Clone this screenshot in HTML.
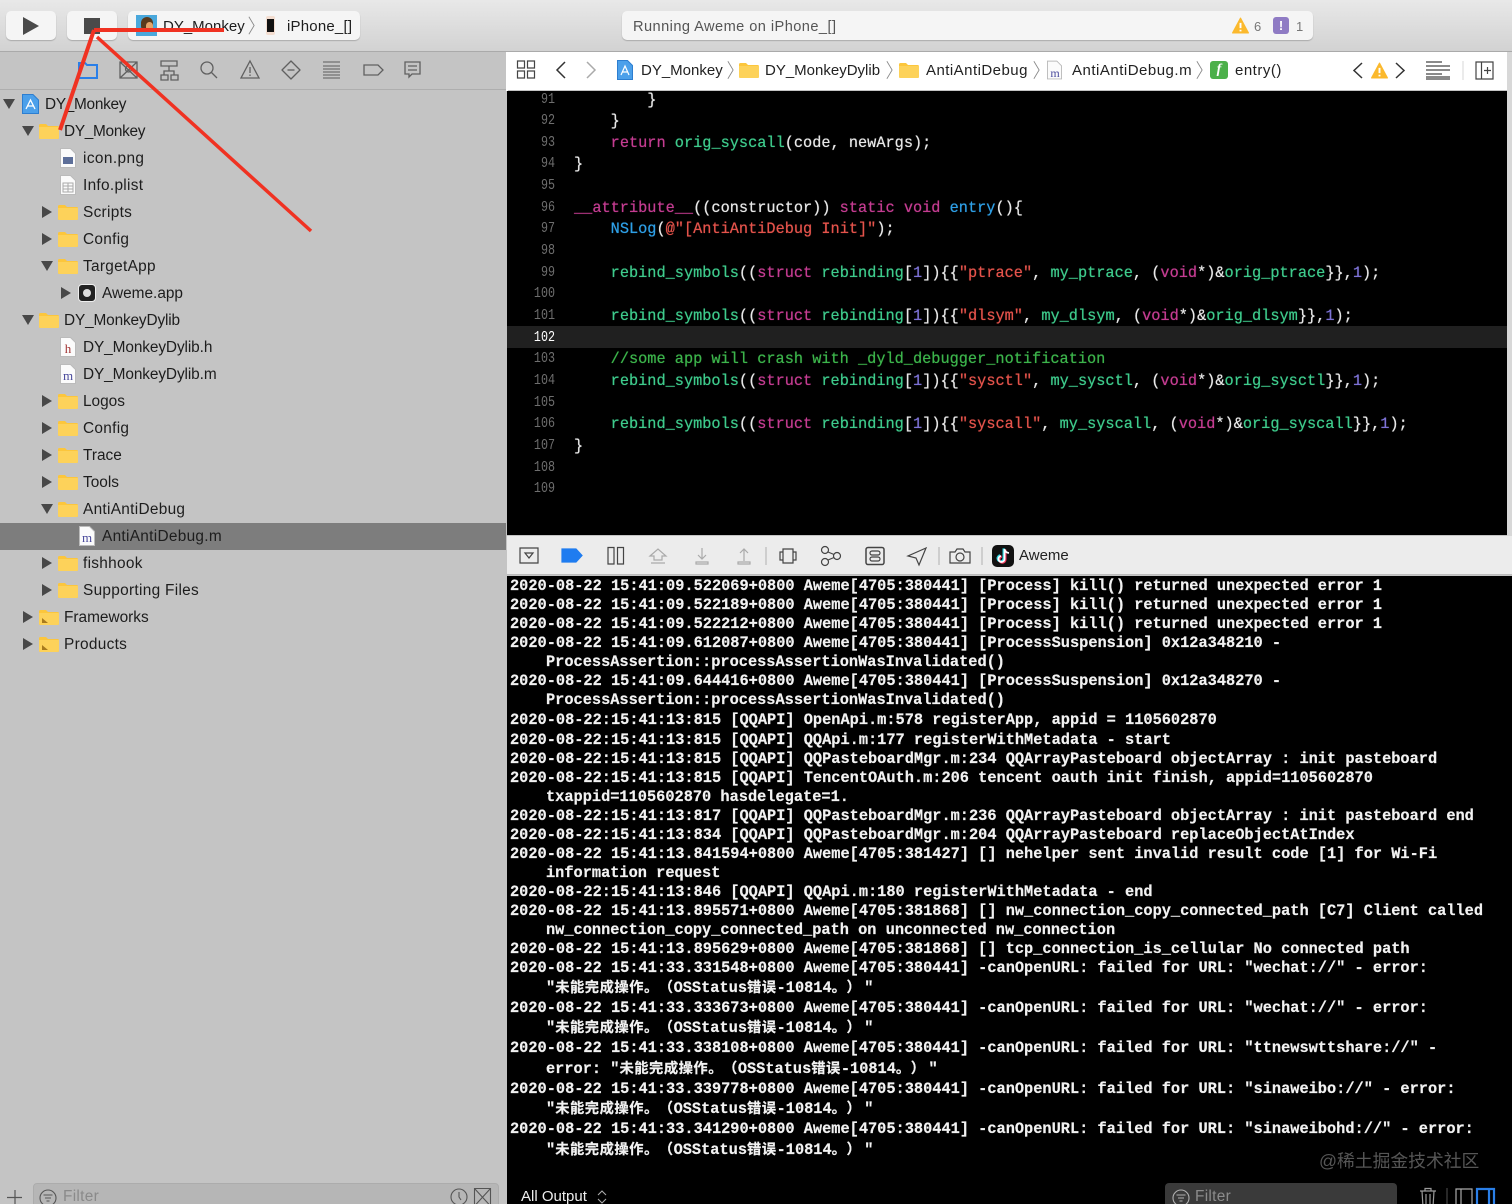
<!DOCTYPE html>
<html><head><meta charset="utf-8"><style>
html,body{margin:0;padding:0;background:#000}
#p{position:relative;width:1512px;height:1204px;overflow:hidden;background:#c4c4c4;font-family:"Liberation Sans","Noto Sans CJK SC",sans-serif;filter:blur(.35px)}
#p>*{position:absolute}
.t{font-size:15.4px;color:#1d1d1d;white-space:pre;line-height:20px;height:20px;margin-top:1px;letter-spacing:.3px}
.j{font-size:15px;color:#222;white-space:pre;line-height:20px;top:61px}
.btn{background:#f5f5f5;border-radius:5px;top:11px;height:29px;box-shadow:0 1px 1px #aaa}
.n{font:15px/20px "Liberation Mono",monospace;color:#6e6e6e;width:48px;text-align:right;left:507px;transform:scaleX(.78);transform-origin:right}
.c{font:15.28px/20px "Liberation Mono",monospace;color:#e8e8e8;white-space:pre;left:574px;margin-top:1px;text-shadow:0 0 .6px currentColor}
.k{color:#c43c91}.g{color:#3ecb8c}.s{color:#e4534b}.u{color:#7d72d6}.b{color:#2e9fe6}.m{color:#3cb44b}
.l{font:bold 15.31px/20px "Liberation Mono","Noto Sans CJK SC",monospace;color:#f2f2f2;white-space:pre;left:510px;margin-top:1px;text-spacing-trim:space-all;-webkit-text-stroke:.2px #f2f2f2}
.z{font-size:14.3px;font-family:"Noto Sans CJK SC",sans-serif;text-spacing-trim:space-all;letter-spacing:.5px;line-height:18px}
.q{margin-left:3px}
.i{left:546px}
svg{overflow:visible}
</style></head><body><div id="p">
<svg width="0" height="0" style="left:0;top:0"><defs>
<symbol id="fo" viewBox="0 0 20 16"><path d="M0 2.500Q0 1 1.500 1H7l2 2h9.500Q20 3 20 4.500V14.500Q20 16 18.500 16H1.500Q0 16 0 14.500Z" fill="#fcc63c"/><path d="M0 4H20V14.500Q20 16 18.500 16H1.500Q0 16 0 14.500Z" fill="#fdd25a"/></symbol>
<symbol id="fp" viewBox="0 0 16 20"><path d="M.5 .5H10.500L15.500 5.500V19.500H.5Z" fill="#fbfbfb" stroke="#bbb"/></symbol>
<symbol id="dn" viewBox="0 0 12 10"><path d="M0 0H12L6 10Z" fill="#484848"/></symbol>
<symbol id="rt" viewBox="0 0 10 12"><path d="M0 0L10 6L0 12Z" fill="#484848"/></symbol>
<symbol id="wn" viewBox="0 0 16 16"><path d="M8 1L15.500 15H.5Z" fill="#fbb92d" stroke="#fbb92d" stroke-linejoin="round"/><path d="M8 5.500V10.500M8 12V13.500" stroke="#fff" stroke-width="1.800"/></symbol>
<symbol id="ch" viewBox="0 0 8 22"><path d="M1 1L7 11L1 21" fill="none" stroke="#888" stroke-width="1"/></symbol>
</defs></svg>

<!-- toolbar -->
<div style="left:0;top:0;width:1512px;height:51px;background:linear-gradient(#e8e8e8,#d2d2d2);border-bottom:1px solid #aaa"></div>
<div class="btn" style="left:6px;width:50px"></div>
<svg style="left:23px;top:17px" width="16" height="18"><path d="M0 0L16 9L0 18Z" fill="#4a4a4a"/></svg>
<div class="btn" style="left:67px;width:50px"></div>
<div style="left:84px;top:18px;width:16px;height:16px;background:#4a4a4a"></div>
<div class="btn" style="left:128px;width:232px"></div>
<div style="left:136px;top:15px;width:21px;height:21px;background:#4aa8dc"></div>
<div style="left:141px;top:17px;width:12px;height:15px;border-radius:6px;background:#5a3a1c"></div>
<div style="left:146px;top:22px;width:7px;height:9px;border-radius:4px;background:#e3a56b"></div>
<div class="t" style="left:163px;top:16px;font-size:15px;letter-spacing:0">DY_Monkey</div>
<svg style="left:248px;top:15px" width="7" height="21"><use href="#ch"/></svg>
<div style="left:266px;top:16px;width:9px;height:19px;background:#f3ddd0;border-radius:2px"></div>
<div style="left:267px;top:19px;width:7px;height:13px;background:#111"></div>
<div class="t" style="left:287px;top:16px;font-size:15px;letter-spacing:.2px">iPhone_[]</div>
<div class="btn" style="left:622px;width:691px"></div>
<div class="t" style="left:633px;top:16px;font-size:14.6px;color:#555;letter-spacing:.44px">Running Aweme on iPhone_[]</div>
<svg style="left:1232px;top:17px" width="17" height="17"><use href="#wn"/></svg>
<div class="t" style="left:1254px;top:16px;font-size:13px;color:#777">6</div>
<div style="left:1273px;top:17px;width:16px;height:17px;border-radius:3px;background:#8f7bc4;color:#fff;font:bold 13px/17px 'Liberation Sans',sans-serif;text-align:center">!</div>
<div class="t" style="left:1296px;top:16px;font-size:13px;color:#777">1</div>

<!-- sidebar tab strip -->
<div style="left:0;top:89px;width:506px;height:1px;background:#aeaeae"></div>
<svg style="left:76px;top:58px" width="350" height="24" fill="none" stroke="#606060" stroke-width="1.300">
<path d="M3 5V20H21V7H11L9 5Z" stroke="#2a7fe8" stroke-width="2"/>
<path d="M44 4H61V20H44ZM44 4L61 20M61 4L44 20"/><circle cx="52.500" cy="11" r="3"/>
<path d="M85 5H101V10H85ZM85 19H92V24H85ZM95 19H102V24H95ZM93 10V15M88 19V15H98V19" transform="translate(0,-2)"/>
<circle cx="131" cy="10" r="6"/><path d="M135.500 14.500L141 20"/>
<path d="M174 3L183 20H165ZM174 9V15M174 16.500V18"/>
<path d="M215 3L224 12L215 21L206 12Z" stroke-linejoin="round"/><path d="M211.500 12H218.500"/>
<path d="M247 4H264M247 8H264M247 11H264M247 14H264M247 17H264M247 20H264" stroke="#707070"/>
<path d="M288 7H302L307 12L302 17H288Z"/>
<path d="M329 4H344V16H336L333 19V16H329ZM332 8H341M332 12H341"/>
</svg>

<!-- sidebar tree -->
<div style="left:0;top:523px;width:506px;height:27px;background:#7d7d7d"></div>
<svg style="left:3px;top:99px" width="12" height="10"><use href="#dn"/></svg>
<svg style="left:22px;top:94px" width="17" height="20"><path d="M.5 .5H11L16.500 6V19.500H.5Z" fill="#4ca0ea" stroke="#2d7ed0"/><path d="M4 15L8.500 6L13 15M5 12H12" fill="none" stroke="#fff" stroke-width="1.300"/></svg>
<div class="t" style="left:45px;top:94px;letter-spacing:-.3px">DY_Monkey</div>
<svg style="left:22px;top:126px" width="12" height="10"><use href="#dn"/></svg>
<svg style="left:39px;top:123px" width="20" height="16"><use href="#fo"/></svg>
<div class="t" style="left:64px;top:121px;letter-spacing:-.3px">DY_Monkey</div>
<svg style="left:60px;top:148px" width="16" height="20"><use href="#fp"/><rect x="3" y="9" width="10" height="7" fill="#5d6f99"/></svg>
<div class="t" style="left:83px;top:148px;letter-spacing:.4px">icon.png</div>
<svg style="left:60px;top:175px" width="16" height="20"><use href="#fp"/><path d="M3 8H13V17H3ZM3 11H13M3 14H13M8 8V17" stroke="#aaa" fill="none"/></svg>
<div class="t" style="left:83px;top:175px">Info.plist</div>
<svg style="left:42px;top:206px" width="10" height="12"><use href="#rt"/></svg>
<svg style="left:58px;top:204px" width="20" height="16"><use href="#fo"/></svg>
<div class="t" style="left:83px;top:202px">Scripts</div>
<svg style="left:42px;top:233px" width="10" height="12"><use href="#rt"/></svg>
<svg style="left:58px;top:231px" width="20" height="16"><use href="#fo"/></svg>
<div class="t" style="left:83px;top:229px">Config</div>
<svg style="left:41px;top:261px" width="12" height="10"><use href="#dn"/></svg>
<svg style="left:58px;top:258px" width="20" height="16"><use href="#fo"/></svg>
<div class="t" style="left:83px;top:256px">TargetApp</div>
<svg style="left:61px;top:287px" width="10" height="12"><use href="#rt"/></svg>
<div style="left:78px;top:284px;width:18px;height:18px;border-radius:4px;background:#222;border:1px solid #eee;box-sizing:border-box"></div>
<div style="left:83px;top:289px;width:8px;height:8px;border-radius:50%;background:#ddd"></div>
<div class="t" style="left:102px;top:283px;letter-spacing:0">Aweme.app</div>
<svg style="left:22px;top:315px" width="12" height="10"><use href="#dn"/></svg>
<svg style="left:39px;top:312px" width="20" height="16"><use href="#fo"/></svg>
<div class="t" style="left:64px;top:310px;letter-spacing:-.15px">DY_MonkeyDylib</div>
<svg style="left:60px;top:337px" width="16" height="20"><use href="#fp"/><text x="8" y="16" font-family="Liberation Serif" font-size="13" text-anchor="middle" fill="#a03030">h</text></svg>
<div class="t" style="left:83px;top:337px;letter-spacing:-.1px">DY_MonkeyDylib.h</div>
<svg style="left:60px;top:364px" width="16" height="20"><use href="#fp"/><text x="8" y="16" font-family="Liberation Serif" font-size="13" text-anchor="middle" fill="#4a4a9c">m</text></svg>
<div class="t" style="left:83px;top:364px;letter-spacing:-.1px">DY_MonkeyDylib.m</div>
<svg style="left:42px;top:395px" width="10" height="12"><use href="#rt"/></svg>
<svg style="left:58px;top:393px" width="20" height="16"><use href="#fo"/></svg>
<div class="t" style="left:83px;top:391px;letter-spacing:0">Logos</div>
<svg style="left:42px;top:422px" width="10" height="12"><use href="#rt"/></svg>
<svg style="left:58px;top:420px" width="20" height="16"><use href="#fo"/></svg>
<div class="t" style="left:83px;top:418px">Config</div>
<svg style="left:42px;top:449px" width="10" height="12"><use href="#rt"/></svg>
<svg style="left:58px;top:447px" width="20" height="16"><use href="#fo"/></svg>
<div class="t" style="left:83px;top:445px;letter-spacing:0">Trace</div>
<svg style="left:42px;top:476px" width="10" height="12"><use href="#rt"/></svg>
<svg style="left:58px;top:474px" width="20" height="16"><use href="#fo"/></svg>
<div class="t" style="left:83px;top:472px;letter-spacing:0">Tools</div>
<svg style="left:41px;top:504px" width="12" height="10"><use href="#dn"/></svg>
<svg style="left:58px;top:501px" width="20" height="16"><use href="#fo"/></svg>
<div class="t" style="left:83px;top:499px">AntiAntiDebug</div>
<svg style="left:79px;top:526px" width="16" height="20"><use href="#fp"/><text x="8" y="16" font-family="Liberation Serif" font-size="13" text-anchor="middle" fill="#4a4a9c">m</text></svg>
<div class="t" style="left:102px;top:526px">AntiAntiDebug.m</div>
<svg style="left:42px;top:557px" width="10" height="12"><use href="#rt"/></svg>
<svg style="left:58px;top:555px" width="20" height="16"><use href="#fo"/></svg>
<div class="t" style="left:83px;top:553px">fishhook</div>
<svg style="left:42px;top:584px" width="10" height="12"><use href="#rt"/></svg>
<svg style="left:58px;top:582px" width="20" height="16"><use href="#fo"/></svg>
<div class="t" style="left:83px;top:580px">Supporting Files</div>
<svg style="left:23px;top:611px" width="10" height="12"><use href="#rt"/></svg>
<svg style="left:39px;top:609px" width="20" height="16"><use href="#fo"/><path d="M3 14L3 9L9 14Z" fill="#a87a1e"/></svg>
<div class="t" style="left:64px;top:607px;letter-spacing:0">Frameworks</div>
<svg style="left:23px;top:638px" width="10" height="12"><use href="#rt"/></svg>
<svg style="left:39px;top:636px" width="20" height="16"><use href="#fo"/><path d="M3 14L3 9L9 14Z" fill="#a87a1e"/></svg>
<div class="t" style="left:64px;top:634px">Products</div>

<!-- sidebar bottom -->
<svg style="left:7px;top:1190px" width="16" height="16"><path d="M8 0V15M0 7.500H15" stroke="#555" stroke-width="1.200"/></svg>
<div style="left:33px;top:1183px;width:466px;height:30px;border-radius:4px;background:#b6b6b6;border:1px solid #acacac;box-sizing:border-box"></div>
<svg style="left:39px;top:1189px" width="18" height="18" fill="none" stroke="#555" stroke-width="1.100"><circle cx="9" cy="9" r="8"/><path d="M4.500 6H13.500M6 9H12M7.500 12H10.500"/></svg>
<div class="t" style="left:63px;top:1186px;color:#8a8a8a">Filter</div>
<svg style="left:450px;top:1188px" width="34" height="18" fill="none" stroke="#555" stroke-width="1.100"><circle cx="9" cy="9" r="8"/><path d="M9 4V9L11 12"/><path d="M24.500 .5H40.500V18H24.500ZM24.500 .5L40.500 18M40.500 .5L24.500 18"/></svg>

<!-- jump bar -->
<div style="left:506px;top:52px;width:2px;height:39px;background:#fff"></div>
<div style="left:507px;top:52px;width:1000px;height:38px;background:#fff"></div>
<div style="left:1507px;top:52px;width:5px;height:484px;background:#d8d8d8"></div>
<svg style="left:517px;top:60px" width="18" height="20" fill="none" stroke="#444" stroke-width="1.200"><path d="M.5 1H7.500V8H.5ZM10.500 1H17.500V8H10.500ZM.5 11H7.500V18H.5ZM10.500 11H17.500V18H10.500Z"/></svg>
<svg style="left:555px;top:61px" width="44" height="18" fill="none" stroke-width="1.500"><path d="M10 1L2 9L10 17" stroke="#333"/><path d="M32 1L40 9L32 17" stroke="#aaa"/></svg>
<svg style="left:617px;top:60px" width="16" height="20"><path d="M.5 .5H10.500L15.500 5.500V19.500H.5Z" fill="#4ca0ea" stroke="#2d7ed0"/><path d="M4 15L8 6L12 15M5 12H11" fill="none" stroke="#fff" stroke-width="1.200"/></svg>
<div class="j" style="left:641px">DY_Monkey</div>
<svg style="left:727px;top:59px" width="7" height="22"><use href="#ch"/></svg>
<svg style="left:739px;top:62px" width="20" height="16"><use href="#fo"/></svg>
<div class="j" style="left:765px">DY_MonkeyDylib</div>
<svg style="left:886px;top:59px" width="7" height="22"><use href="#ch"/></svg>
<svg style="left:899px;top:62px" width="20" height="16"><use href="#fo"/></svg>
<div class="j" style="left:926px;letter-spacing:.46px">AntiAntiDebug</div>
<svg style="left:1033px;top:59px" width="7" height="22"><use href="#ch"/></svg>
<svg style="left:1047px;top:60px" width="15" height="20"><use href="#fp"/><text x="8" y="17" font-family="Liberation Serif" font-size="12" text-anchor="middle" fill="#4a4a9c">m</text></svg>
<div class="j" style="left:1072px;letter-spacing:.5px">AntiAntiDebug.m</div>
<svg style="left:1196px;top:59px" width="7" height="22"><use href="#ch"/></svg>
<div style="left:1210px;top:61px;width:18px;height:18px;border-radius:3px;background:#4cb04a;color:#fff;font:italic bold 14px/18px 'Liberation Serif',serif;text-align:center">f</div>
<div class="j" style="left:1235px;letter-spacing:.5px">entry()</div>
<svg style="left:1352px;top:62px" width="56" height="17" fill="none" stroke="#333" stroke-width="1.500"><path d="M10 1L2 8.500L10 16M44 1L52 8.500L44 16"/></svg>
<svg style="left:1371px;top:62px" width="17" height="17"><use href="#wn"/></svg>
<svg style="left:1426px;top:61px" width="70" height="19" fill="none" stroke="#444" stroke-width="1.200"><path d="M0 1H16M0 5H24M0 9H24M0 13H16M0 16H24M0 18H24"/><path d="M37 0V19" stroke="#ddd"/><path d="M50 1H67V18H50ZM55.500 1V18M61.500 6V13M58 9.500H65"/></svg>

<!-- editor -->
<div style="left:507px;top:91px;width:1000px;height:444px;background:#000;overflow:hidden"></div>
<div style="left:507px;top:326px;width:1000px;height:22px;background:#202020"></div>
<div class="n" style="top:90px">91</div><div class="n" style="top:111px">92</div><div class="n" style="top:133px">93</div><div class="n" style="top:154px">94</div><div class="n" style="top:176px">95</div><div class="n" style="top:198px">96</div><div class="n" style="top:219px">97</div><div class="n" style="top:241px">98</div><div class="n" style="top:263px">99</div><div class="n" style="top:284px">100</div><div class="n" style="top:306px">101</div><div class="n" style="top:328px;color:#fff">102</div><div class="n" style="top:349px">103</div><div class="n" style="top:371px">104</div><div class="n" style="top:393px">105</div><div class="n" style="top:414px">106</div><div class="n" style="top:436px">107</div><div class="n" style="top:458px">108</div><div class="n" style="top:479px">109</div>
<div class="c" style="top:89px">        }</div>
<div class="c" style="top:110px">    }</div>
<div class="c" style="top:132px">    <span class="k">return</span> <span class="g">orig_syscall</span>(code, newArgs);</div>
<div class="c" style="top:153px">}</div>
<div class="c" style="top:197px"><span class="k">__attribute__</span>((constructor)) <span class="k">static</span> <span class="k">void</span> <span class="b">entry</span>(){</div>
<div class="c" style="top:218px">    <span class="b">NSLog</span>(<span class="s">@"[AntiAntiDebug Init]"</span>);</div>
<div class="c" style="top:262px">    <span class="g">rebind_symbols</span>((<span class="k">struct</span> <span class="g">rebinding</span>[<span class="u">1</span>]){{<span class="s">"ptrace"</span>, <span class="g">my_ptrace</span>, (<span class="k">void</span>*)&amp;<span class="g">orig_ptrace</span>}},<span class="u">1</span>);</div>
<div class="c" style="top:305px">    <span class="g">rebind_symbols</span>((<span class="k">struct</span> <span class="g">rebinding</span>[<span class="u">1</span>]){{<span class="s">"dlsym"</span>, <span class="g">my_dlsym</span>, (<span class="k">void</span>*)&amp;<span class="g">orig_dlsym</span>}},<span class="u">1</span>);</div>
<div class="c" style="top:348px">    <span class="m">//some app will crash with _dyld_debugger_notification</span></div>
<div class="c" style="top:370px">    <span class="g">rebind_symbols</span>((<span class="k">struct</span> <span class="g">rebinding</span>[<span class="u">1</span>]){{<span class="s">"sysctl"</span>, <span class="g">my_sysctl</span>, (<span class="k">void</span>*)&amp;<span class="g">orig_sysctl</span>}},<span class="u">1</span>);</div>
<div class="c" style="top:413px">    <span class="g">rebind_symbols</span>((<span class="k">struct</span> <span class="g">rebinding</span>[<span class="u">1</span>]){{<span class="s">"syscall"</span>, <span class="g">my_syscall</span>, (<span class="k">void</span>*)&amp;<span class="g">orig_syscall</span>}},<span class="u">1</span>);</div>
<div class="c" style="top:435px">}</div>

<!-- debug bar -->
<div style="left:507px;top:536px;width:1005px;height:39px;background:#ececec;border-bottom:1px solid #bbb;box-sizing:border-box"></div>
<svg style="left:518px;top:546px" width="480" height="20" fill="none" stroke="#444" stroke-width="1.200">
<path d="M2 2H20V17H2ZM7 7H15L11 12Z"/>
<path d="M44 3H58L64 9.500L58 16H44Z" fill="#1f7cf0" stroke="#1f7cf0"/>
<path d="M90 1.500H96V18H90ZM99.500 1.500H105.500V18H99.500Z"/>
<g stroke="#aaa"><path d="M132 10L140 3L148 10H144V14H136V10ZM133 17H147"/><path d="M184 2V12M180 9L184 13L188 9M178 16H190V18H178Z"/><path d="M226 15V3M222 7L226 3L230 7M220 16H232V18H220Z"/></g>
<path d="M248 1V19M421 1V19M464 1V19" stroke="#bbb"/>
<path d="M265 3H275V17H265ZM262 6H265V14H262ZM275 6H278V14H275Z"/>
<circle cx="307" cy="4" r="3.500"/><circle cx="307" cy="16" r="3.500"/><circle cx="319" cy="10" r="3.500"/><path d="M310 6L316 8.500M310 14L316 11.500"/>
<rect x="348" y="1.500" width="18" height="17" rx="2" stroke-width="1.500"/><rect x="352" y="5" width="10" height="4" rx="2"/><rect x="352" y="11" width="10" height="4" rx="2"/>
<path d="M408 2L390 10L398 12L401 19Z"/>
<path d="M432 6H437L439 3H445L447 6H452V17H432Z"/><circle cx="442" cy="11" r="4"/>
</svg>
<div style="left:992px;top:545px;width:22px;height:22px;border-radius:5px;background:#111"></div>
<svg style="left:996px;top:548px" width="15" height="16" fill="none" stroke-width="2.400"><path d="M8.500 1V11A3 3 0 1 1 5 8" stroke="#25d4e0" transform="translate(-.8,-.6)"/><path d="M8.500 1V11A3 3 0 1 1 5 8" stroke="#f0385c" transform="translate(.8,.6)"/><path d="M8.500 1V11A3 3 0 1 1 5 8M8.500 1Q9 4.500 13 5" stroke="#fff" stroke-width="1.800"/></svg>
<div class="j" style="left:1019px;top:546px">Aweme</div>

<!-- console -->
<div style="left:507px;top:576px;width:1005px;height:628px;background:#000"></div>
<div class="l" style="top:575px">2020-08-22 15:41:09.522069+0800 Aweme[4705:380441] [Process] kill() returned unexpected error 1</div>
<div class="l" style="top:594px">2020-08-22 15:41:09.522189+0800 Aweme[4705:380441] [Process] kill() returned unexpected error 1</div>
<div class="l" style="top:613px">2020-08-22 15:41:09.522212+0800 Aweme[4705:380441] [Process] kill() returned unexpected error 1</div>
<div class="l" style="top:632px">2020-08-22 15:41:09.612087+0800 Aweme[4705:380441] [ProcessSuspension] 0x12a348210 -</div>
<div class="l i" style="top:651px">ProcessAssertion::processAssertionWasInvalidated()</div>
<div class="l" style="top:670px">2020-08-22 15:41:09.644416+0800 Aweme[4705:380441] [ProcessSuspension] 0x12a348270 -</div>
<div class="l i" style="top:689px">ProcessAssertion::processAssertionWasInvalidated()</div>
<div class="l" style="top:709px">2020-08-22:15:41:13:815 [QQAPI] OpenApi.m:578 registerApp, appid = 1105602870</div>
<div class="l" style="top:729px">2020-08-22:15:41:13:815 [QQAPI] QQApi.m:177 registerWithMetadata - start</div>
<div class="l" style="top:748px">2020-08-22:15:41:13:815 [QQAPI] QQPasteboardMgr.m:234 QQArrayPasteboard objectArray : init pasteboard</div>
<div class="l" style="top:767px">2020-08-22:15:41:13:815 [QQAPI] TencentOAuth.m:206 tencent oauth init finish, appid=1105602870</div>
<div class="l i" style="top:786px">txappid=1105602870 hasdelegate=1.</div>
<div class="l" style="top:805px">2020-08-22:15:41:13:817 [QQAPI] QQPasteboardMgr.m:236 QQArrayPasteboard objectArray : init pasteboard end</div>
<div class="l" style="top:824px">2020-08-22:15:41:13:834 [QQAPI] QQPasteboardMgr.m:204 QQArrayPasteboard replaceObjectAtIndex</div>
<div class="l" style="top:843px">2020-08-22 15:41:13.841594+0800 Aweme[4705:381427] [] nehelper sent invalid result code [1] for Wi-Fi</div>
<div class="l i" style="top:862px">information request</div>
<div class="l" style="top:881px">2020-08-22:15:41:13:846 [QQAPI] QQApi.m:180 registerWithMetadata - end</div>
<div class="l" style="top:900px">2020-08-22 15:41:13.895571+0800 Aweme[4705:381868] [] nw_connection_copy_connected_path [C7] Client called</div>
<div class="l i" style="top:919px">nw_connection_copy_connected_path on unconnected nw_connection</div>
<div class="l" style="top:938px">2020-08-22 15:41:13.895629+0800 Aweme[4705:381868] [] tcp_connection_is_cellular No connected path</div>
<div class="l" style="top:957px">2020-08-22 15:41:33.331548+0800 Aweme[4705:380441] -canOpenURL: failed for URL: "wechat://" - error:</div>
<div class="l i" style="top:977px">"<span class="z">未能完成操作。（</span>OSStatus<span class="z">错误</span>-10814<span class="z">。）</span><span class="q">"</span></div>
<div class="l" style="top:997px">2020-08-22 15:41:33.333673+0800 Aweme[4705:380441] -canOpenURL: failed for URL: "wechat://" - error:</div>
<div class="l i" style="top:1017px">"<span class="z">未能完成操作。（</span>OSStatus<span class="z">错误</span>-10814<span class="z">。）</span><span class="q">"</span></div>
<div class="l" style="top:1037px">2020-08-22 15:41:33.338108+0800 Aweme[4705:380441] -canOpenURL: failed for URL: "ttnewswttshare://" -</div>
<div class="l i" style="top:1058px">error: "<span class="z">未能完成操作。（</span>OSStatus<span class="z">错误</span>-10814<span class="z">。）</span><span class="q">"</span></div>
<div class="l" style="top:1078px">2020-08-22 15:41:33.339778+0800 Aweme[4705:380441] -canOpenURL: failed for URL: "sinaweibo://" - error:</div>
<div class="l i" style="top:1098px">"<span class="z">未能完成操作。（</span>OSStatus<span class="z">错误</span>-10814<span class="z">。）</span><span class="q">"</span></div>
<div class="l" style="top:1118px">2020-08-22 15:41:33.341290+0800 Aweme[4705:380441] -canOpenURL: failed for URL: "sinaweibohd://" - error:</div>
<div class="l i" style="top:1139px">"<span class="z">未能完成操作。（</span>OSStatus<span class="z">错误</span>-10814<span class="z">。）</span><span class="q">"</span></div>
<div style="left:1319px;top:1150px;font-size:17.800px;line-height:22px;color:#565656;white-space:pre">@稀土掘金技术社区</div>

<!-- console bottom -->
<div class="t" style="left:521px;top:1186px;color:#eee;font-size:15px;letter-spacing:0">All Output</div>
<svg style="left:597px;top:1190px" width="10" height="14" fill="none" stroke="#aaa" stroke-width="1.100"><path d="M1 5L5 1L9 5M1 9L5 13L9 9"/></svg>
<div style="left:1165px;top:1183px;width:232px;height:30px;border-radius:4px;background:#3a3a3a"></div>
<svg style="left:1172px;top:1189px" width="18" height="18" fill="none" stroke="#b0b0b0" stroke-width="1.100"><circle cx="9" cy="9" r="8"/><path d="M4.500 6H13.500M6 9H12M7.500 12H10.500"/></svg>
<div class="t" style="left:1195px;top:1186px;color:#8c8c8c">Filter</div>
<svg style="left:1419px;top:1187px" width="80" height="22" fill="none" stroke="#9a9a9a" stroke-width="1.200"><path d="M1 4H17M6 4V1.500H12V4M3 4L4 20H14L15 4M7 7V18M11 7V18"/><path d="M28 1V20" stroke="#444"/><path d="M37 2H53V20H37ZM42 2V20" stroke="#aaa"/><path d="M58 2H75V20H58ZM70 2V20" stroke="#2a7fe8" stroke-width="2.200"/></svg>

<!-- red annotation lines -->
<svg style="left:0;top:0" width="1512" height="1204" fill="none" stroke="#f03222" stroke-width="4"><path d="M224 30H94"/><path d="M94 30L60 130"/><path d="M97 37L311 231" stroke-width="3.500"/></svg>
</div></body></html>
